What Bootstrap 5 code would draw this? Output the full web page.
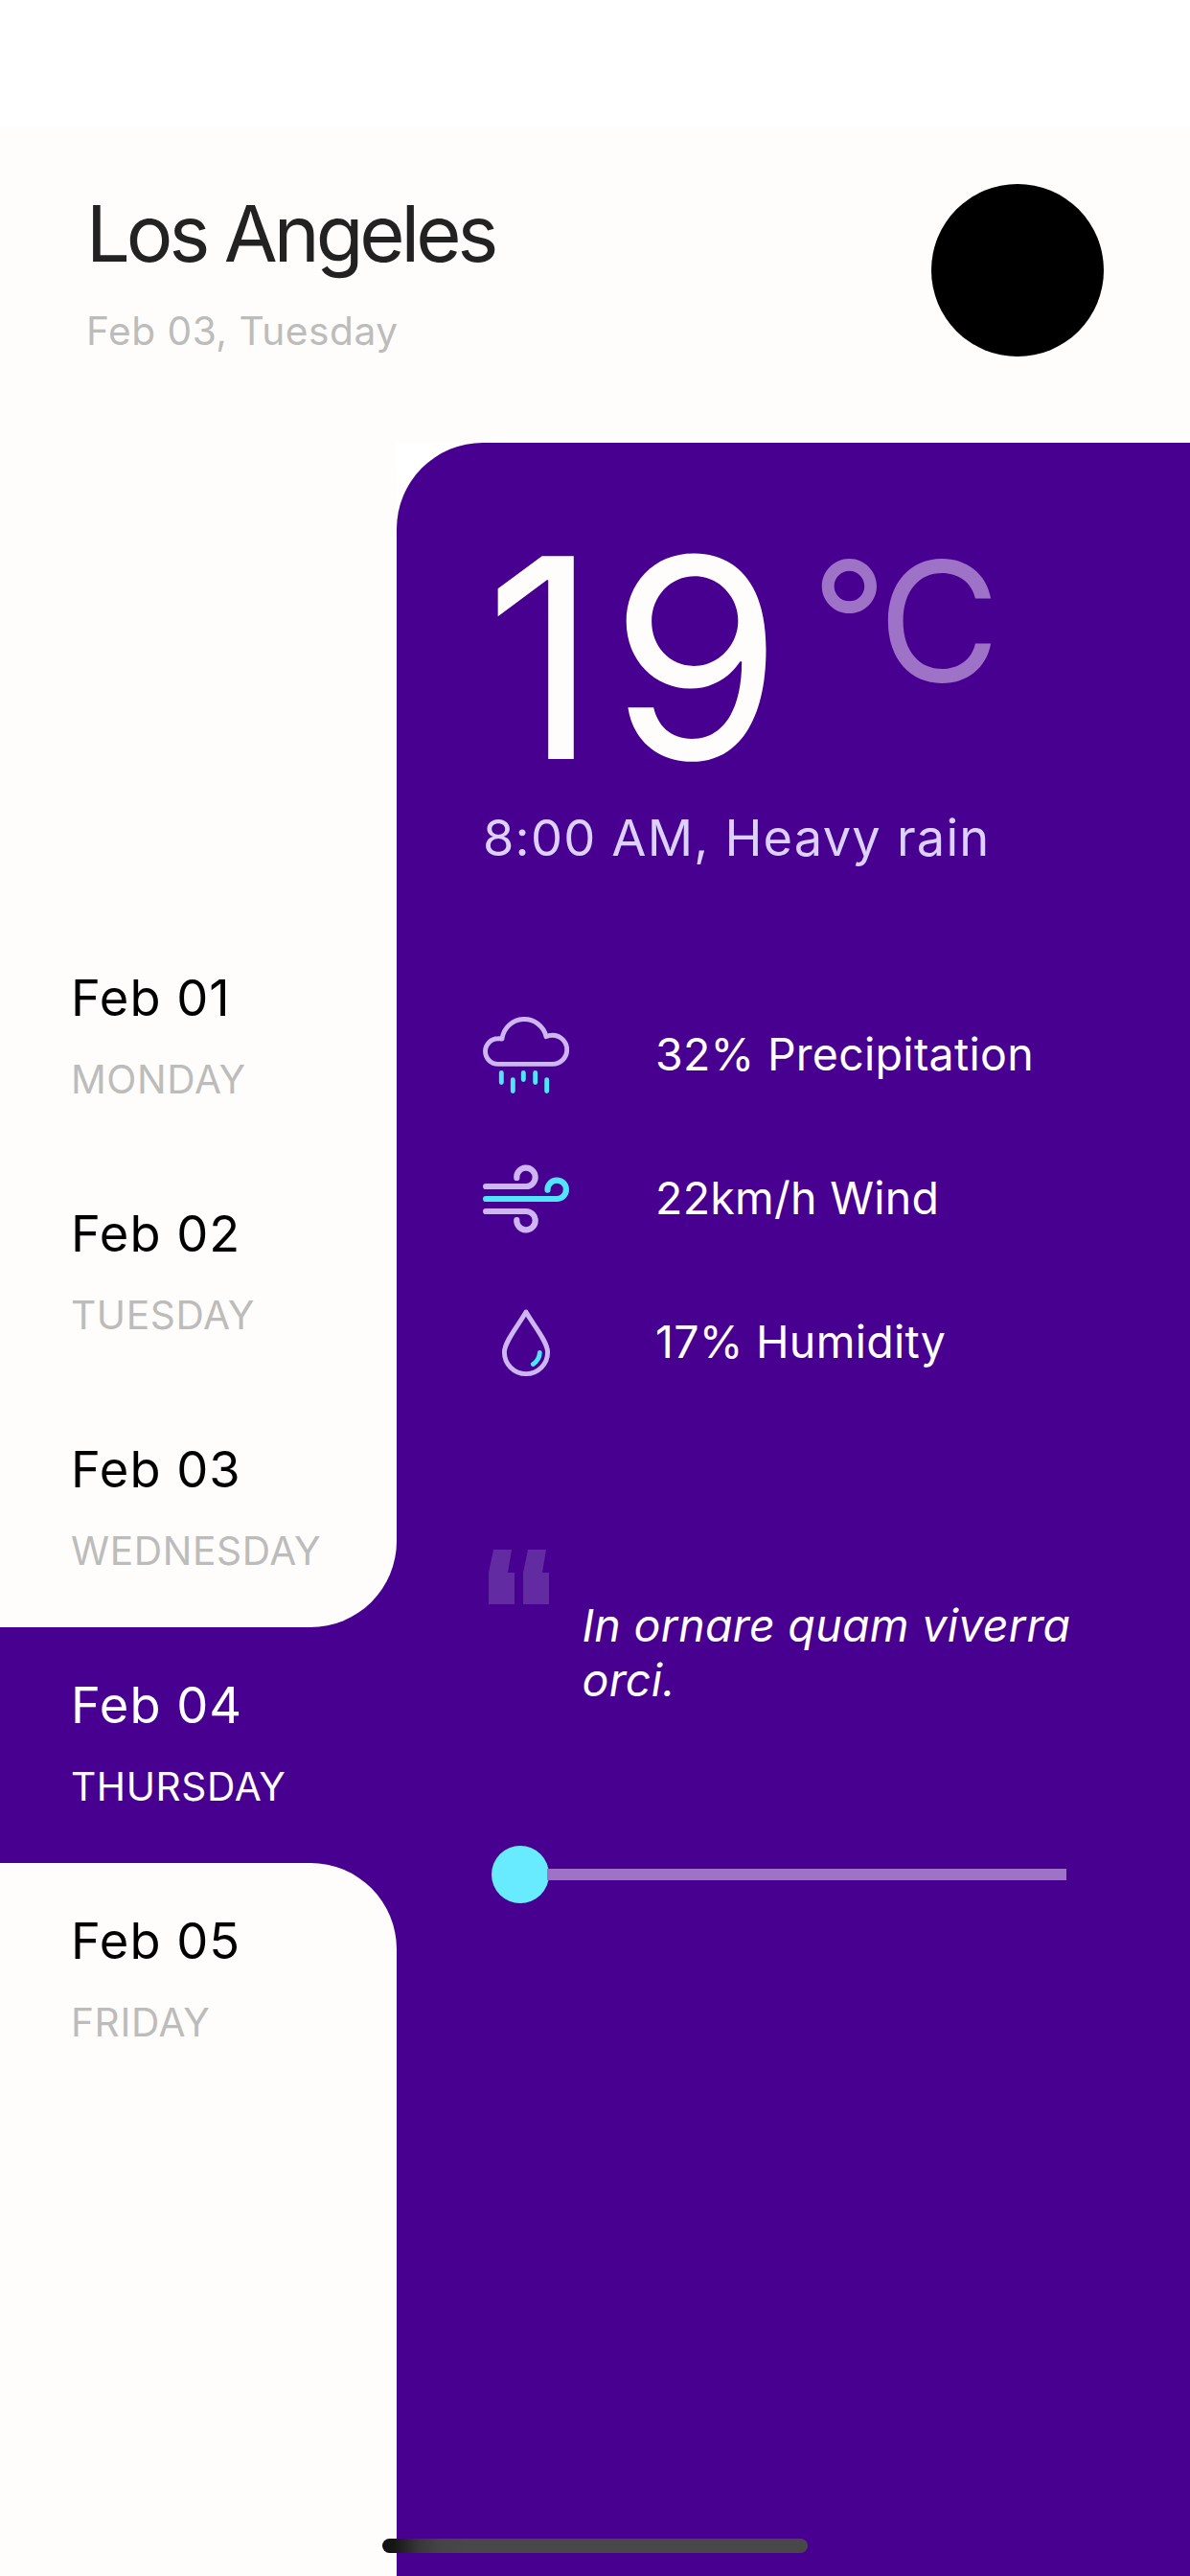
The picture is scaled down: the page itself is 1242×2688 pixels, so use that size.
<!DOCTYPE html>
<html lang="en">
<head>
<meta charset="utf-8">
<meta name="viewport" content="width=device-width, initial-scale=1">
<title>Weather</title>
<link href="https://cdn.jsdelivr.net/npm/bootstrap@5.3.0/dist/css/bootstrap.min.css" rel="stylesheet">
<style>
:root { --ink: #47008f; --paper: #fffdfc; --lilac: #cdb6f2; --cyan: #52e5ff; }
body { font-family: Inter, "Liberation Sans", sans-serif; background: #fff; color: #000; }
.app { width: 1242px; height: 2688px; padding-top: 132px; background: #fff; }
.topbar { height: 330px; padding: 60px 90px 0 90px; background: var(--paper); }
.city { font-size: 81.2px; line-height: 98px; letter-spacing: -4.1px; color: #222; padding-top: 2.5px; margin: 0; font-weight: 400; }
.today { font-size: 40.7px; line-height: 49px; letter-spacing: .5px; color: #bcbcbb; margin-top: 28px; }
.avatar { width: 180px; height: 180px; background: #000; }
.days { width: 414px; background: var(--ink); }
.panel-top { background: var(--paper); padding-top: 498px; border-bottom-right-radius: 90px; }
.panel-bottom { background: var(--paper); border-top-right-radius: 90px; }
.day { height: 246px; padding: 49.5px 0 0 74px; }
.day-date { font-size: 52.4px; line-height: 63px; letter-spacing: 1px; }
.day-name { font-size: 40.7px; line-height: 49px; margin-top: 29px; color: #bcbcbb; letter-spacing: .6px; }
.day.current, .current .day-name { color: #fff; }
.detail { background: var(--ink); border-top-left-radius: 90px; padding: 64px 90px 0; }
.reading { height: 317px; }
.temp { font-size: 291px; line-height: 320px; letter-spacing: 12px; margin-left: 2px; color: var(--paper); }
.unit { font-size: 174px; line-height: 210px; letter-spacing: -7.6px; margin: 17px 0 0 18px; color: #9e72c7; }
.cond { font-size: 52.4px; line-height: 63px; color: #ddd1ff; letter-spacing: 1.2px; margin-bottom: 120px; }
.stat { height: 150px; font-size: 46.5px; letter-spacing: .27px; color: #fff; }
.stat svg { width: 90px; height: 90px; margin-right: 90px; }
.l, .c { fill: none; stroke-linecap: round; stroke-linejoin: round; stroke-width: 4.9; }
.l { stroke: var(--lilac); }
.c { stroke: var(--cyan); }
.gust { stroke-width: 6.2; }
.quote { margin: 141px 0 0 6px; }
.quote svg { width: 63px; height: 57px; fill: #632ba1; }
.saying { font-size: 46.5px; line-height: 57.3px; letter-spacing: .3px; font-style: italic; color: #fff; margin: 50.5px 0 0 34.5px; }
.timeline { margin: 144px 39px 0 9px; }
.knob { width: 60px; height: 60px; background: #69ebff; }
.track { height: 12px; background: #9e72c7; margin-left: -2px; }
.home-bar { left: 399px; top: 2649px; width: 444px; height: 15px; background: linear-gradient(90deg, #111 0, #161616 12px, #373737 38px, #444 60px, #484848 90px); }
</style>
</head>
<body>
<main class="app d-flex flex-column position-relative overflow-hidden">
<header class="topbar d-flex justify-content-between align-items-start">
<div><h1 class="city">Los Angeles</h1><div class="today">Feb 03, Tuesday</div></div>
<div class="avatar rounded-circle"></div>
</header>
<div class="d-flex flex-grow-1">
<aside class="days d-flex flex-column flex-shrink-0">
<div class="panel-top">
<div class="day"><div class="day-date">Feb 01</div><div class="day-name">MONDAY</div></div>
<div class="day"><div class="day-date">Feb 02</div><div class="day-name">TUESDAY</div></div>
<div class="day"><div class="day-date">Feb 03</div><div class="day-name">WEDNESDAY</div></div>
</div>
<div class="day current"><div class="day-date">Feb 04</div><div class="day-name">THURSDAY</div></div>
<div class="panel-bottom flex-grow-1">
<div class="day"><div class="day-date">Feb 05</div><div class="day-name">FRIDAY</div></div>
</div>
</aside>
<section class="detail flex-grow-1">
<div class="reading d-flex align-items-start"><div class="temp">19</div><div class="unit">°C</div></div>
<div class="cond">8:00 AM, Heavy rain</div>
<div class="stat d-flex align-items-center">
<svg viewBox="0 0 90 90"><path class="l" d="M15.8 54.4H72.6A15.1 15.1 0 0 0 72.6 24.2Q69 24.2 66 25.6A23.4 23.4 0 0 0 20 28Q18 27.7 15.8 27.8A13.3 13.3 0 0 0 15.8 54.4Z"/><path class="c" d="M19.3 63.5v10M31.3 70.8v11.7M42.3 63.5v7M54.7 63.5v10M66.7 70.8v11.7"/></svg>
<span>32% Precipitation</span></div>
<div class="stat d-flex align-items-center">
<svg viewBox="0 0 90 90"><path class="l gust" d="M3.1 32H45A9.7 9.7 0 1 0 35.3 23M3.1 58H45A9.7 9.7 0 1 1 35.3 67"/><path class="c gust" d="M3.1 45H77.2A9.7 9.7 0 1 0 67.5 35.6"/></svg>
<span>22km/h Wind</span></div>
<div class="stat d-flex align-items-center">
<svg viewBox="0 0 90 90"><path class="l" d="M45 13C37 27 22.4 44 22.4 55A22.6 22.6 0 0 0 67.6 55C67.6 44 53 27 45 13Z"/><path class="c" d="M59.3 55.5Q59 63 52.3 67.5"/></svg>
<span>17% Humidity</span></div>
<div class="quote d-flex align-items-start">
<svg class="flex-shrink-0" viewBox="0 0 63 57"><path d="M5 0H24L20 24H27V57H0V24ZM41 0H60L56 24H63V57H36V24Z"/></svg>
<div class="saying">In ornare quam viverra orci.</div>
</div>
<div class="timeline d-flex align-items-center"><div class="knob rounded-circle flex-shrink-0"></div><div class="track flex-grow-1"></div></div>
</section>
</div>
<div class="home-bar position-absolute rounded-pill"></div>
</main>
<script src="https://cdn.jsdelivr.net/npm/bootstrap@5.3.0/dist/js/bootstrap.bundle.min.js"></script>
</body>
</html>
